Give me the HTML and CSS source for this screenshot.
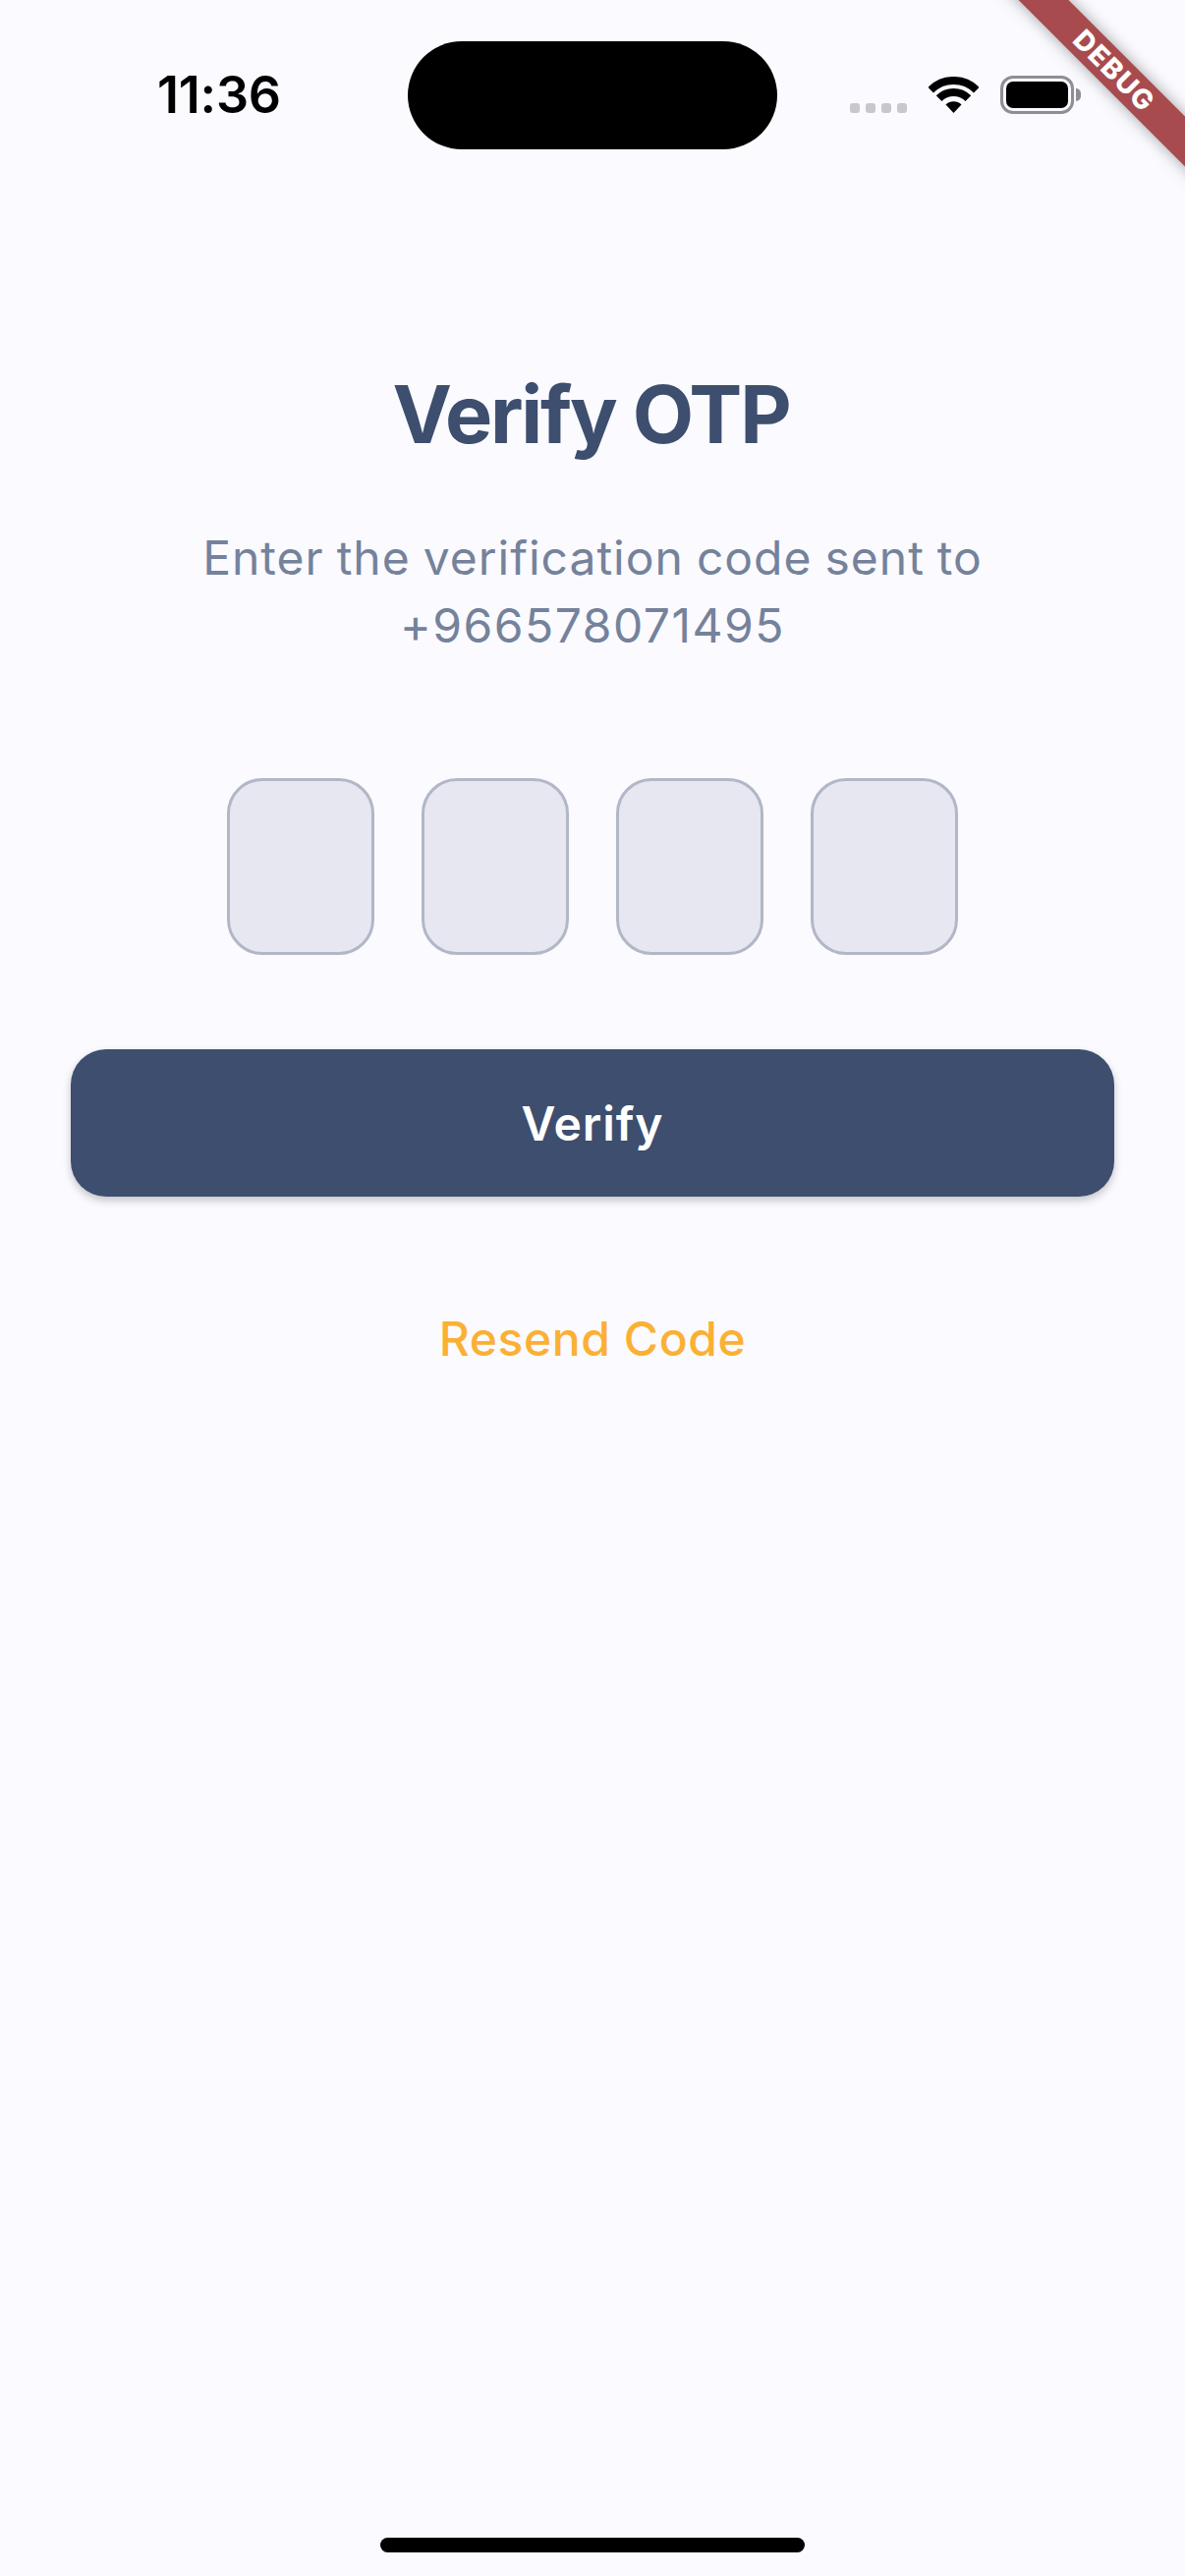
FILE: index.html
```html
<!DOCTYPE html>
<html>
<head>
    <title>Verify OTP</title>
    <link rel="stylesheet" href="styles.css">
</head>
<body>
    <div class="status-bar">
        <span class="time">11:36</span>
        <div class="island"></div>
        <div class="status-icons">
            <div class="signal-dots"><i></i><i></i><i></i><i></i></div>
            <svg class="wifi" width="51" height="37" viewBox="0 0 51 37">
                <path d="M2.2 13.6A33 33 0 0 1 48.8 13.6" fill="none" stroke="#000" stroke-width="8"/>
                <path d="M10.6 22.1A21 21 0 0 1 40.4 22.1" fill="none" stroke="#000" stroke-width="8"/>
                <path d="M25.5 37L17.5 28.6A11.4 11.4 0 0 1 33.5 28.6Z" fill="#000"/>
            </svg>
            <div class="battery">
                <div class="battery-body"><div class="battery-fill"></div></div>
                <div class="battery-cap"></div>
            </div>
        </div>
    </div>

    <div class="debug-corner"><div class="debug-band">DEBUG</div></div>

    <div class="otp-page">
        <h1>Verify OTP</h1>
        <p class="subtitle">Enter the verification code sent to<br><span class="phone">+966578071495</span></p>
        <div class="otp-row">
            <div class="otp-box"></div>
            <div class="otp-box"></div>
            <div class="otp-box"></div>
            <div class="otp-box"></div>
        </div>
        <button class="verify-btn" type="button">Verify</button>
        <a class="resend">Resend Code</a>
    </div>

    <div class="home-bar"></div>
</body>
</html>
```

FILE: styles.css
```css
html, body {
    margin: 0;
    padding: 0;
}

body {
    font-family: 'Inter', 'Liberation Sans', sans-serif;
    background-color: #fafaff;
    width: 1206px;
    height: 2622px;
    overflow: hidden;
    position: relative;
    display: flex;
    flex-direction: column;
}

/* status bar */
.status-bar {
    display: flex;
    align-items: center;
    height: 110px;
    padding: 42px 106px 0 160px;
}

.time {
    width: 255px;
    font-size: 52px;
    font-weight: 600;
    line-height: 112px;
    letter-spacing: -0.2px;
    color: #000;
}

.island {
    width: 376px;
    height: 110px;
    background-color: #000;
    border-radius: 55px;
}

.status-icons {
    display: flex;
    align-items: flex-end;
    margin-left: 74px;
    height: 39px;
    margin-top: -2px;
}

.signal-dots {
    display: flex;
    gap: 6px;
    margin-bottom: 1px;
}

.signal-dots i {
    width: 10px;
    height: 10px;
    border-radius: 3px;
    background-color: #c7c7cc;
}

.wifi {
    margin-left: 22px;
    margin-bottom: 1px;
}

.battery {
    display: flex;
    align-items: center;
    margin-left: 22px;
}

.battery-body {
    width: 75px;
    height: 39px;
    box-sizing: border-box;
    border: 3px solid #8e8e93;
    border-radius: 13px;
    padding: 3px;
}

.battery-fill {
    height: 100%;
    background-color: #000;
    border-radius: 7px;
}

.battery-cap {
    width: 5px;
    height: 13px;
    margin-left: 2px;
    background-color: #8e8e93;
    border-radius: 0 6px 6px 0;
}

/* debug ribbon */
.debug-corner {
    position: absolute;
    top: 0;
    right: 0;
    width: 260px;
    height: 260px;
    overflow: hidden;
}

.debug-band {
    position: absolute;
    left: 8px;
    top: 54px;
    width: 360px;
    height: 36px;
    transform: rotate(45deg);
    background-color: #a84b4e;
    box-shadow: 0 0 16px rgba(0, 0, 0, 0.35);
    color: #fff;
    font-size: 28px;
    font-weight: 800;
    letter-spacing: 1.3px;
    line-height: 36px;
    text-align: center;
}

/* otp form */
.otp-page {
    display: flex;
    flex-direction: column;
    align-items: center;
    padding: 0 72px;
}

h1 {
    margin: 222px 3px 0 0;
    font-size: 81px;
    font-weight: 700;
    line-height: 96px;
    letter-spacing: -2.2px;
    color: #3d4e6e;
}

.subtitle {
    margin: 63px 0 0;
    font-size: 48px;
    font-weight: 370;
    line-height: 69px;
    letter-spacing: 1px;
    word-spacing: -1.5px;
    text-align: center;
    color: #75829b;
}

.phone {
    letter-spacing: 1.5px;
}

.otp-row {
    display: flex;
    gap: 48px;
    margin-top: 121px;
}

.otp-box {
    width: 150px;
    height: 180px;
    box-sizing: border-box;
    background-color: #e6e7f1;
    border: 3px solid #b1b7c6;
    border-radius: 36px;
}

.verify-btn {
    width: 100%;
    height: 150px;
    margin-top: 96px;
    background-color: #3d4e6e;
    color: #fff;
    border: none;
    border-radius: 36px;
    box-shadow: 0 4px 8px rgba(0, 0, 0, 0.22);
    font-family: inherit;
    font-size: 48px;
    font-weight: 600;
    letter-spacing: 0.9px;
}

.resend {
    margin-top: 115px;
    font-size: 48px;
    font-weight: 500;
    line-height: 60px;
    letter-spacing: 0.6px;
    color: #fbb034;
}

.home-bar {
    width: 432px;
    height: 15px;
    margin: auto auto 24px;
    background-color: #000;
    border-radius: 8px;
}
```
